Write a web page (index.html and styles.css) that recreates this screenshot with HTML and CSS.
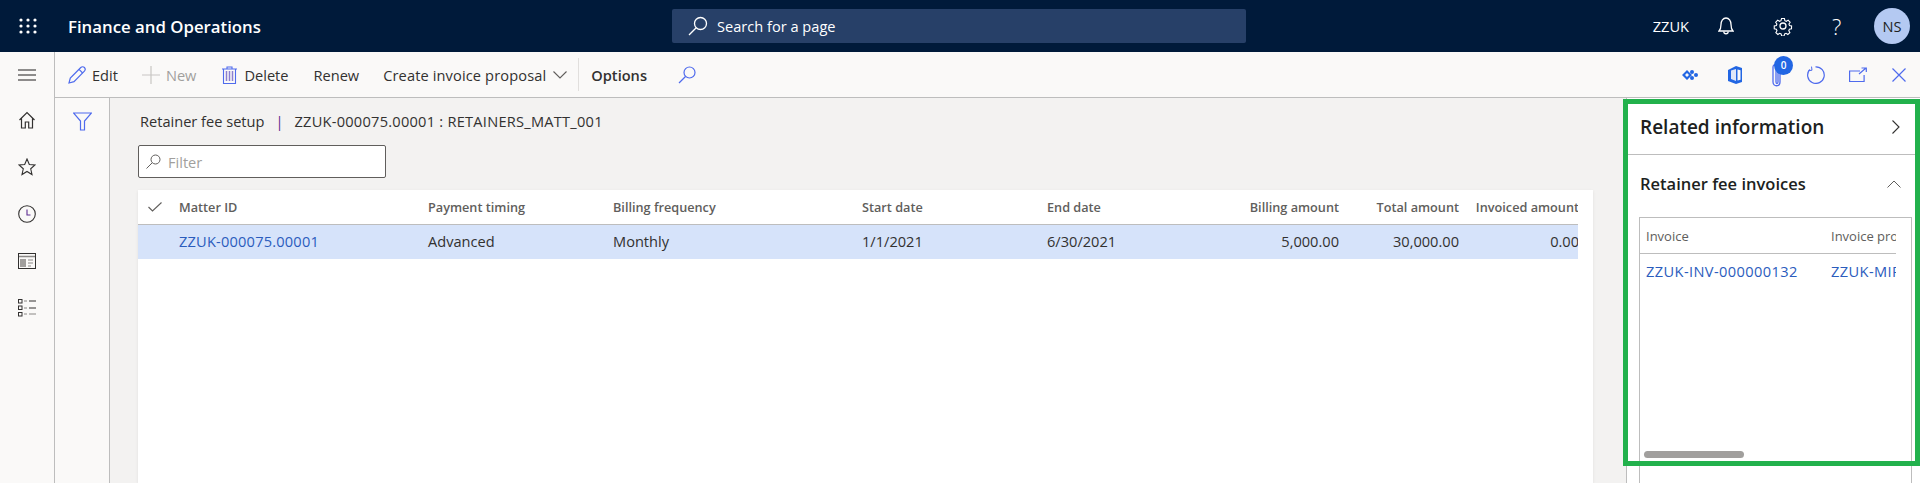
FILE: index.html
```html
<!DOCTYPE html>
<html lang="en">
<head>
    <meta charset="UTF-8">
    <meta name="viewport" content="width=device-width, initial-scale=1.0">
    <title>Retainer fee setup</title>
    <link rel="stylesheet" href="styles.css">
</head>
<body>

    <!-- Top bar -->
    <header class="topbar">
        <svg class="waffle" width="18" height="16" viewBox="0 0 18 16">
            <g fill="#fff">
                <circle cx="2" cy="2" r="1.6"/><circle cx="9" cy="2" r="1.6"/><circle cx="16" cy="2" r="1.6"/>
                <circle cx="2" cy="8" r="1.6"/><circle cx="9" cy="8" r="1.6"/><circle cx="16" cy="8" r="1.6"/>
                <circle cx="2" cy="14" r="1.6"/><circle cx="9" cy="14" r="1.6"/><circle cx="16" cy="14" r="1.6"/>
            </g>
        </svg>
        <span class="app-name">Finance and Operations</span>
        <div class="page-search">
            <svg width="20" height="20" viewBox="0 0 20 20" fill="none" stroke="#fff" stroke-width="1.3">
                <circle cx="12.5" cy="7.5" r="6"/><path d="M8.2 11.8 1 19"/>
            </svg>
            <span>Search for a page</span>
        </div>
        <div class="top-right">
            <span class="company">ZZUK</span>
            <svg class="bell" width="16" height="18" viewBox="0 0 16 18" fill="none" stroke="#fff" stroke-width="1.3">
                <path d="M1 14h14c-1.500-1.500-2-3-2-6.500C13 4 11 1 8 1S3 4 3 7.500C3 11 2.500 12.500 1 14Z"/>
                <path d="M5.800 14.500c0 3 4.400 3 4.400 0"/>
            </svg>
            <svg class="gear" width="20" height="20" viewBox="0 0 20 20" fill="none" stroke="#fff" stroke-width="1.3">
                <circle cx="10" cy="10" r="3"/>
                <path d="M8.300 1.200h3.400l.5 2.500 1.700.8 2.200-1.400 2.300 2.500-1.400 2.100.6 1.700 2.500.6-.1 3.300-2.500.5-.7 1.700 1.300 2.200-2.400 2.300-2.100-1.400-1.700.7-.6 2.400H8.400l-.6-2.400-1.700-.7-2.100 1.400-2.400-2.300 1.300-2.200-.7-1.700-2.500-.5v-3.300l2.500-.6.6-1.700L1.400 5.600l2.300-2.500 2.200 1.400 1.700-.8Z" transform="translate(1.500 1.500) scale(.85)"/>
            </svg>
            <span class="help">?</span>
            <span class="avatar">NS</span>
        </div>
    </header>

    <div class="shell">

        <!-- Left rail -->
        <nav class="rail">
            <svg width="18" height="12" viewBox="0 0 18 12" stroke="#201f1e" stroke-width="1"><path d="M0 1h18M0 6h18M0 11h18"/></svg>
            <svg class="rail-home" width="16" height="18" viewBox="0 0 16 18" fill="none" stroke="#323130" stroke-width="1.200">
                <path d="M.5 9 8 1.500 15.500 9M2.500 7.500V17h3.800v-6h3.400v6h3.800V7.500"/>
            </svg>
            <svg width="18" height="18" viewBox="0 0 18 18" fill="none" stroke="#323130" stroke-width="1.100">
                <path d="m9 1 2.300 5.500 5.700.5-4.300 3.800 1.300 5.700L9 13.500 4 16.500l1.300-5.700L1 7l5.700-.5Z"/>
            </svg>
            <svg width="18" height="18" viewBox="0 0 18 18" fill="none" stroke="#323130" stroke-width="1.100">
                <circle cx="9" cy="9" r="8.300"/><path d="M9 4.500V10h3.500" stroke="#5c2d91"/>
            </svg>
            <svg class="rail-form" width="18" height="16" viewBox="0 0 18 16" fill="none" stroke="#323130">
                <rect x=".5" y=".5" width="17" height="15"/>
                <path d="M1 3.500h16" stroke-width="1.500" stroke="#8a8886"/>
                <rect x="2" y="6" width="6" height="8" fill="#a19f9d" stroke="none"/>
                <path d="M10 7h5M10 10h5M10 13h3" stroke="#8a8886"/>
            </svg>
            <svg width="18" height="18" viewBox="0 0 18 18" fill="none" stroke="#323130">
                <rect x=".5" y=".5" width="3.500" height="3.500"/><rect x=".5" y="7" width="3.500" height="3.500"/><rect x=".5" y="13.500" width="3.500" height="3.500"/>
                <path d="M6 2h3" stroke="#8a8886"/><path d="M11 2h7"/><path d="M6 9h3" stroke="#8a8886"/><path d="M11 9h7"/><path d="M6 15h3" stroke="#8a8886"/><path d="M11 15h7" stroke="#8a8886"/>
            </svg>
        </nav>

        <div class="workspace">

            <!-- Action pane -->
            <div class="toolbar">
                <button class="tool">
                    <svg width="18" height="18" viewBox="0 0 18 18" fill="none" stroke="#4f6bed" stroke-width="1.200">
                        <path d="M1 17l1.300-5L12.800 1.500c1-1 2.700-1 3.600 0s1 2.600 0 3.600L6 15.700Z"/><path d="M11 3.300l3.700 3.700"/>
                    </svg>
                    Edit
                </button>
                <button class="tool tool-new disabled">
                    <svg width="18" height="18" viewBox="0 0 18 18" stroke="#c8c6c4" stroke-width="1.200"><path d="M9 0v18M0 9h18"/></svg>
                    New
                </button>
                <button class="tool tool-delete">
                    <svg width="15" height="18" viewBox="0 0 15 18" fill="none" stroke="#4f6bed" stroke-width="1.100">
                        <path d="M0 3h15M5 3V1h5v2M1.500 3v14.500h12V3"/><path d="M4.500 5v10M7.500 5v10M10.500 5v10" stroke="#8b7fd0" stroke-width="1.500"/>
                    </svg>
                    Delete
                </button>
                <button class="tool">Renew</button>
                <button class="tool tool-menu">
                    Create invoice proposal
                    <svg width="14" height="8" viewBox="0 0 14 8" fill="none" stroke="#605e5c" stroke-width="1.100"><path d="m.5.500 6.500 6.500L13.500.500"/></svg>
                </button>
                <span class="tool-sep"></span>
                <button class="tool tool-options">Options</button>
                <svg class="tool-find" width="18" height="18" viewBox="0 0 18 18" fill="none" stroke="#4f6bed" stroke-width="1.200">
                    <circle cx="11.500" cy="6.500" r="5.500"/><path d="M7.500 10.500 1 17"/>
                </svg>
                <div class="tool-right">
                    <svg class="tool-apps" width="16" height="12" viewBox="0 0 16 12" fill="#2266e3"><path d="M5 1l5 5-5 5-5-5Zm0 3L3 6l2 2 2-2Z" fill-rule="evenodd"/><circle cx="10" cy="3" r="2"/><circle cx="14" cy="6" r="2"/><circle cx="10" cy="9" r="2"/></svg>
                    <svg class="tool-office" width="14" height="18" viewBox="0 0 14 18"><path d="M8 0 14 2v14l-6 2-8-3V4Z" fill="#2266e3"/><path d="M3 4.500 8 3v12l-5-2Z" fill="#dfe7f8"/><path d="M9.500 3.500 12.500 4.300v9.400l-3 .8Z" fill="#faf9f8"/></svg>
                    <span class="clip">
                        <svg width="10" height="24" viewBox="0 0 10 24" fill="none" stroke="#4f6bed" stroke-width="1.300"><path d="M8 4v15c0 5-7 5-7 0V4c0-4 8-4 8 0"/><path d="M4 6v13c0 2 2 2 2 0V7"/></svg>
                        <span class="clip-count">0</span>
                    </span>
                    <svg class="tool-refresh" width="18" height="18" viewBox="0 0 18 18" fill="none" stroke="#4f6bed" stroke-width="1.200"><path d="M8.500 .8A8.300 8.300 0 1 1 2.800 3.500"/><path d="M4.500 .6 5 4.200 1.400 4.700" stroke-width="1"/></svg>
                    <svg class="tool-open" width="18" height="16" viewBox="0 0 18 16" fill="none" stroke="#4f6bed" stroke-width="1.200"><path d="M11 4H.6v10.500h14.500V8"/><path d="M10 7 17 1M12.500 1H17.300v4"/></svg>
                    <svg width="14" height="14" viewBox="0 0 14 14" stroke="#4f6bed" stroke-width="1.200"><path d="m.5.500 13 13M13.500.500l-13 13"/></svg>
                </div>
            </div>

            <div class="body-row">

                <!-- Filter pane toggle -->
                <div class="filter-pane">
                    <svg width="19" height="19" viewBox="0 0 19 19" fill="none" stroke="#4f6bed" stroke-width="1.200"><path d="M.5 1h18l-7 8v9h-4V9Z"/></svg>
                </div>

                <!-- Form content -->
                <main class="content">
                    <div class="caption">
                        <span>Retainer fee setup</span>
                        <span class="caption-bar">|</span>
                        <span class="caption-id">ZZUK-000075.00001 : RETAINERS_MATT_001</span>
                    </div>
                    <div class="filter-box">
                        <svg width="15" height="15" viewBox="0 0 15 15" fill="none" stroke="#605e5c" stroke-width="1"><circle cx="9.500" cy="5.500" r="4.500"/><path d="M6.200 8.800.5 14.500"/></svg>
                        <span>Filter</span>
                    </div>
                    <div class="card">
                        <div class="grid">
                            <div class="grid-row grid-head">
                                <span class="check">
                                    <svg width="14" height="10" viewBox="0 0 14 10" fill="none" stroke="#605e5c" stroke-width="1.100"><path d="m.5 5 4 4 9-8.500"/></svg>
                                </span>
                                <span>Matter ID</span>
                                <span>Payment timing</span>
                                <span>Billing frequency</span>
                                <span>Start date</span>
                                <span>End date</span>
                                <span class="num">Billing amount</span>
                                <span class="num">Total amount</span>
                                <span class="num">Invoiced amount</span>
                            </div>
                            <div class="grid-row grid-selected">
                                <span></span>
                                <a href="#">ZZUK-000075.00001</a>
                                <span>Advanced</span>
                                <span>Monthly</span>
                                <span>1/1/2021</span>
                                <span>6/30/2021</span>
                                <span class="num">5,000.00</span>
                                <span class="num">30,000.00</span>
                                <span class="num">0.00</span>
                            </div>
                        </div>
                    </div>
                </main>

                <!-- Related information -->
                <aside class="related">
                    <div class="related-head">
                        <h2>Related information</h2>
                        <svg width="8" height="14" viewBox="0 0 8 14" fill="none" stroke="#323130" stroke-width="1.100"><path d="m.5.500 6.500 6.500-6.500 6.500"/></svg>
                    </div>
                    <div class="part-head">
                        <h3>Retainer fee invoices</h3>
                        <svg width="14" height="8" viewBox="0 0 14 8" fill="none" stroke="#605e5c" stroke-width="1"><path d="m.5 7.500 6.500-6.500 6.500 6.500"/></svg>
                    </div>
                    <div class="part-grid">
                        <div class="part-inner">
                            <div class="part-row part-grid-head"><span>Invoice</span><span>Invoice proposal</span></div>
                            <div class="part-row part-grid-line"><a href="#">ZZUK-INV-000000132</a><a href="#">ZZUK-MIP-000000132</a></div>
                        </div>
                        <div class="part-scroll"></div>
                    </div>
                </aside>
            </div>
        </div>
    </div>

    <!-- Green highlight drawn over the screenshot -->
    <div class="highlight"></div>

</body>
</html>
```

FILE: styles.css
```css
/* Reset and global styling */
* {
    margin: 0;
    padding: 0;
    box-sizing: border-box;
}
body {
    font-family: 'Open Sans', 'Noto Sans', Arial, sans-serif;
    font-size: 14.6px;
    color: #323130;
    background-color: #fff;
    height: 100vh;
    overflow: hidden;
    display: flex;
    flex-direction: column;
    position: relative;
}
a {
    color: #2b5cbd;
    text-decoration: none;
}

/* Top bar */
.topbar {
    height: 52px;
    flex: none;
    background-color: #001a3a;
    color: #fff;
    display: flex;
    align-items: center;
    padding-left: 19px;
}
.app-name {
    font-size: 16.8px;
    font-weight: 600;
    margin-left: 31px;
    width: 604px;
}
.page-search {
    width: 574px;
    height: 34px;
    background-color: #274068;
    border-radius: 2px;
    display: flex;
    align-items: center;
    gap: 9px;
    padding-left: 16px;
}
.top-right {
    margin-left: auto;
    display: flex;
    align-items: center;
    padding-right: 10px;
}
.company {
    margin-right: 29px;
}
.gear {
    margin-left: 39px;
}
.help {
    font-size: 22px;
    margin-left: 39px;
    width: 11px;
    font-weight: 300;
}
.avatar {
    width: 36px;
    height: 36px;
    border-radius: 50%;
    background-color: #b4c9f2;
    color: #201f1e;
    margin-left: 31px;
    display: flex;
    align-items: center;
    justify-content: center;
}

/* Layout under the top bar */
.shell {
    flex: 1;
    display: flex;
    min-height: 0;
}
.rail {
    width: 55px;
    flex: none;
    background-color: #faf9f8;
    border-right: 1px solid #bdbdbd;
    display: flex;
    flex-direction: column;
    align-items: center;
    gap: 29px;
    padding-top: 17px;
    padding-right: 1px;
}
.rail-home {
    margin-top: 1px;
}
.rail-form {
    margin: 1px 0;
}
.workspace {
    flex: 1;
    display: flex;
    flex-direction: column;
    min-width: 0;
}

/* Action pane */
.toolbar {
    height: 46px;
    flex: none;
    background-color: #faf9f8;
    border-bottom: 1px solid #bdbdbd;
    display: flex;
    align-items: center;
    padding-left: 13px;
}
.tool {
    background: none;
    border: none;
    font: inherit;
    color: #323130;
    display: flex;
    align-items: center;
    gap: 6px;
    white-space: nowrap;
    margin-right: 24px;
}
.tool.disabled {
    color: #a19f9d;
}
.tool-delete {
    margin-left: 2px;
    margin-right: 25px;
    gap: 7px;
}
.tool-menu {
    gap: 7px;
    margin-right: 11px;
    letter-spacing: 0.13px;
}
.tool-sep {
    width: 1px;
    height: 33px;
    background-color: #e1dfdd;
    margin-right: 12px;
}
.tool-options {
    font-weight: 600;
    margin-right: 31px;
}
.tool-right {
    margin-left: auto;
    display: flex;
    align-items: center;
    gap: 27px;
    padding-right: 14px;
}
.tool-apps,
.tool-office {
    margin-right: 3px;
}
.tool-refresh {
    margin-right: -3px;
}
.tool-open {
    margin-right: -2px;
}
.clip {
    position: relative;
    display: flex;
    margin-right: -2px;
}
.clip-count {
    position: absolute;
    left: 2px;
    top: -7px;
    width: 19px;
    height: 19px;
    border-radius: 50%;
    background-color: #2266e3;
    color: #fff;
    font-size: 10px;
    font-weight: 600;
    text-align: center;
    line-height: 19px;
}

/* Form area */
.body-row {
    flex: 1;
    display: flex;
    min-height: 0;
}
.filter-pane {
    width: 55px;
    flex: none;
    background-color: #faf9f8;
    border-right: 1px solid #bdbdbd;
    padding: 14px 0 0 18px;
}
.content {
    flex: 1;
    min-width: 0;
    background-color: #f3f2f1;
    padding: 0 33px 0 28px;
    display: flex;
    flex-direction: column;
}
.caption {
    height: 45px;
    flex: none;
    display: flex;
    align-items: center;
    padding-left: 2px;
    gap: 11px;
}
.caption-bar {
    color: #5c2d91;
}
.caption-id {
    letter-spacing: 0.25px;
}
.filter-box {
    width: 248px;
    height: 33px;
    flex: none;
    margin-top: 2px;
    background-color: #fff;
    border: 1px solid #605e5c;
    border-radius: 2px;
    display: flex;
    align-items: center;
    gap: 7px;
    padding-left: 7px;
    color: #a19f9d;
}
.card {
    flex: 1;
    margin-top: 12px;
    background-color: #fff;
    box-shadow: 0 1px 3px rgba(0, 0, 0, 0.08);
    padding-right: 15px;
    overflow: hidden;
}
.grid {
    overflow: hidden;
}
.grid-row {
    display: grid;
    grid-template-columns: 41px 249px 185px 249px 185px 172px 120px 120px 120px;
    width: 1441px;
    align-items: center;
}
.grid-head {
    height: 35px;
    border-bottom: 1px solid #bdbdbd;
    color: #605e5c;
    font-size: 12.7px;
    font-weight: 600;
}
.grid-selected {
    height: 34px;
    padding-bottom: 2px;
    background-color: #d6e3fa;
}
.grid-selected a {
    letter-spacing: 0.2px;
}
.check {
    padding-left: 10px;
    display: flex;
}
.num {
    text-align: right;
    white-space: nowrap;
}

/* Related information */
.related {
    width: 294px;
    flex: none;
    background-color: #fff;
    border-left: 1px solid #bdbdbd;
    display: flex;
    flex-direction: column;
}
.related-head {
    height: 57px;
    flex: none;
    border-bottom: 1px solid #bdbdbd;
    display: flex;
    align-items: center;
    justify-content: space-between;
    padding: 1px 20px 0 12px;
    margin-left: 1px;
}
.related-head h2 {
    font-size: 19px;
    font-weight: 600;
    color: #201f1e;
}
.part-head {
    height: 62px;
    flex: none;
    display: flex;
    align-items: center;
    justify-content: space-between;
    padding: 0 19px 5px 13px;
}
.part-head h3 {
    font-size: 16.5px;
    font-weight: 600;
    color: #201f1e;
}
.part-grid {
    flex: 1;
    margin: 0 8px -12px 12px;
    border: 1px solid #bdbdbd;
    padding-right: 15px;
    position: relative;
    min-height: 0;
}
.part-inner {
    overflow: hidden;
}
.part-row {
    display: grid;
    grid-template-columns: 185px 200px;
    height: 36px;
    align-items: center;
    padding-left: 6px;
    white-space: nowrap;
}
.part-grid-line {
    padding-bottom: 2px;
}
.part-row a {
    letter-spacing: 0.4px;
}
.part-grid-head {
    border-bottom: 1px solid #bdbdbd;
    color: #605e5c;
    font-size: 13px;
    padding-top: 1px;
}
.part-scroll {
    position: absolute;
    left: 4px;
    top: 233px;
    width: 100px;
    height: 7px;
    border-radius: 4px;
    background-color: #a19f9d;
}

/* Green highlight */
.highlight {
    position: absolute;
    left: 1623px;
    top: 99px;
    width: 297px;
    height: 367px;
    border: 5px solid #22b14c;
}
```
